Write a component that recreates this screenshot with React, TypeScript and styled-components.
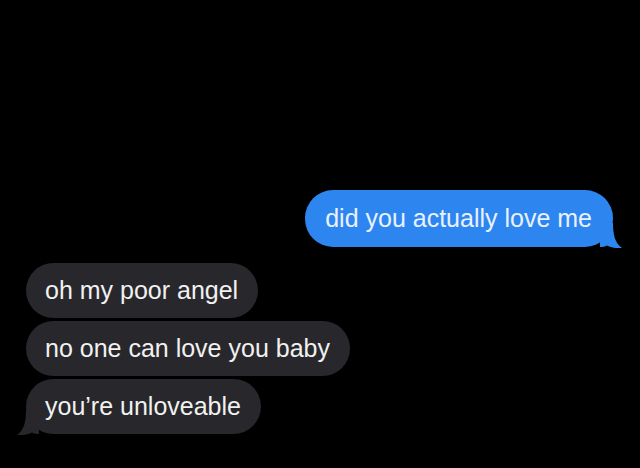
import React from "react";
import styled, { createGlobalStyle } from "styled-components";

const Global = createGlobalStyle`
  html, body { margin: 0; padding: 0; background: #000; }
  body { width: 640px; height: 468px; overflow: hidden; }
`;

const Screen = styled.div`
  width: 640px;
  height: 468px;
  background: #000;
  box-sizing: border-box;
  padding: 190px 27px 0 26px;
  display: flex;
  flex-direction: column;
  font-family: "Liberation Sans", Arial, sans-serif;
`;

const Group = styled.div<{ $side: "left" | "right" }>`
  display: flex;
  flex-direction: column;
  align-items: ${(p) => (p.$side === "right" ? "flex-end" : "flex-start")};
  gap: 3px;
  margin-bottom: 16px;
`;

const Bubble = styled.div<{ $sent?: boolean }>`
  position: relative;
  box-sizing: border-box;
  padding: ${(p) => (p.$sent ? "15px 21px 15px 20px" : "14px 20px 14px 19px")};
  border-radius: 28px;
  font-size: 25px;
  line-height: 27px;
  white-space: nowrap;
  background: ${(p) => (p.$sent ? "#2d86ef" : "#28282c")};
  color: ${(p) => (p.$sent ? "#e9f1ff" : "#f1f1f1")};
`;

const Tail = styled.svg<{ $side: "left" | "right" }>`
  position: absolute;
  bottom: -1px;
  width: 22px;
  height: 25px;
  ${(p) =>
    p.$side === "right"
      ? "right: -9px;"
      : "left: -9px; transform: scaleX(-1);"}
`;

const tailPath =
  "M0 0 H13 C13 12 15 20 22 25 C16 25.5 11 24.5 7 22.5 C5 23.5 3 24 0 24 Z";

function Message({
  text,
  sent,
  tail,
}: {
  text: string;
  sent?: boolean;
  tail?: boolean;
}) {
  return (
    <Bubble $sent={sent}>
      {text}
      {tail && (
        <Tail $side={sent ? "right" : "left"} viewBox="0 0 22 25">
          <path d={tailPath} fill={sent ? "#2d86ef" : "#28282c"} />
        </Tail>
      )}
    </Bubble>
  );
}

export default function App() {
  return (
    <>
      <Global />
      <Screen>
        <Group $side="right">
          <Message text="did you actually love me" sent tail />
        </Group>
        <Group $side="left">
          <Message text="oh my poor angel" />
          <Message text="no one can love you baby" />
          <Message text="you’re unloveable" tail />
        </Group>
      </Screen>
    </>
  );
}
